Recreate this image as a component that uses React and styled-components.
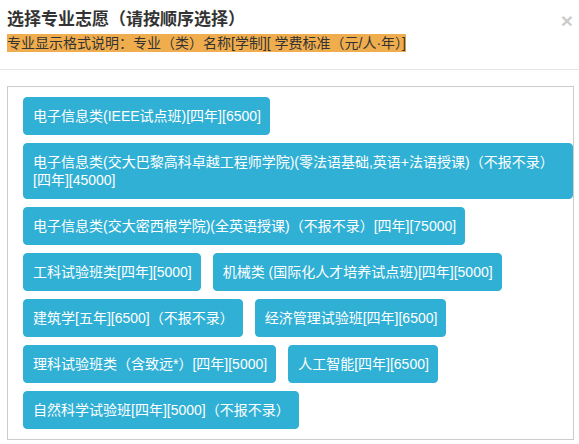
import React from 'react';
import styled, { createGlobalStyle } from 'styled-components';

const GlobalStyle = createGlobalStyle`
  body {
    margin: 0;
    background: #fff;
    font-family: "Liberation Sans", "Noto Sans CJK SC", sans-serif;
    color: #333;
  }
`;

const Header = styled.div`
  display: flex;
  justify-content: space-between;
  align-items: flex-start;
  padding: 9px 6px 17px 7px;
  border-bottom: 1px solid #e5e5e5;
`;

const Title = styled.h4`
  margin: 0;
  font-size: 17px;
  line-height: 22px;
  font-weight: bold;
  color: #333;
`;

const Hint = styled.div`
  margin-top: 3px;
  font-size: 14px;
  line-height: 18px;
`;

const HintText = styled.span`
  display: inline-block;
  background: #f0ad4e;
  color: #333;
`;

const Close = styled.button`
  border: 0;
  background: transparent;
  padding: 0;
  margin-top: 1px;
  font-family: "Liberation Sans", sans-serif;
  font-size: 21px;
  line-height: 21px;
  font-weight: bold;
  color: #000;
  opacity: 0.2;
  cursor: pointer;
`;

const Body = styled.div`
  padding: 16px 5px 4px 7px;
`;

const Box = styled.div`
  border: 1px solid #ccc;
  padding: 10px 0 10px 15px;
  display: flex;
  flex-wrap: wrap;
  gap: 8px 12px;
`;

const Major = styled.button`
  background: #31b0d5;
  color: #fff;
  border: 1px solid #31b0d5;
  border-radius: 4px;
  padding: 9px 8px 9px 9px;
  font-family: "Liberation Sans", "Noto Sans CJK SC", sans-serif;
  font-size: 14px;
  line-height: 18px;
  text-align: left;
  white-space: normal;
  max-width: 100%;
  cursor: pointer;
`;

const majors = [
  "电子信息类(IEEE试点班)[四年][6500]",
  "电子信息类(交大巴黎高科卓越工程师学院)(零法语基础,英语+法语授课)（不报不录）[四年][45000]",
  "电子信息类(交大密西根学院)(全英语授课)（不报不录）[四年][75000]",
  "工科试验班类[四年][5000]",
  "机械类 (国际化人才培养试点班)[四年][5000]",
  "建筑学[五年][6500]（不报不录）",
  "经济管理试验班[四年][6500]",
  "理科试验班类（含致远*）[四年][5000]",
  "人工智能[四年][6500]",
  "自然科学试验班[四年][5000]（不报不录）",
];

export default function App() {
  return (
    <>
      <GlobalStyle />
      <Header>
        <div>
          <Title>选择专业志愿（请按顺序选择）</Title>
          <Hint>
            <HintText>专业显示格式说明：专业（类）名称[学制][ 学费标准（元/人·年）]</HintText>
          </Hint>
        </div>
        <Close>×</Close>
      </Header>
      <Body>
        <Box>
          {majors.map((m) => (
            <Major key={m}>{m}</Major>
          ))}
        </Box>
      </Body>
    </>
  );
}
